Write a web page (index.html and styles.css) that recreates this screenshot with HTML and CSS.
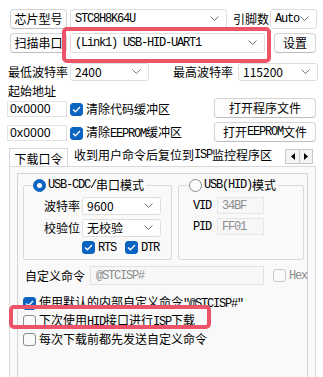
FILE: index.html
```html
<!DOCTYPE html>
<html>
<head>
<meta charset="utf-8">
<link rel="stylesheet" href="styles.css">
</head>
<body>
<div class="win">
  <div class="row r1">
    <div class="btn w57">芯片型号</div>
    <div class="sel mono s-chip"><span>STC8H8K64U</span><svg class="chev" width="9" height="6" viewBox="0 0 9 6"><path d="M0.5 0.5L4.5 4.5L8.5 0.5" fill="none" stroke="#707070"/></svg></div>
    <span class="lbl pins">引脚数</span>
    <div class="sel mono s-auto"><span>Auto</span><svg class="chev" width="9" height="6" viewBox="0 0 9 6"><path d="M0.5 0.5L4.5 4.5L8.5 0.5" fill="none" stroke="#707070"/></svg></div>
  </div>
  <div class="row r2">
    <div class="btn w57">扫描串口</div>
    <div class="sel mono s-port"><span>(Link1) USB-HID-UART1</span><svg class="chev" width="9" height="6" viewBox="0 0 9 6"><path d="M0.5 0.5L4.5 4.5L8.5 0.5" fill="none" stroke="#707070"/></svg><b class="mark mark1"></b></div>
    <div class="btn set">设置</div>
  </div>
  <div class="row r3">
    <span class="lbl w60">最低波特率</span>
    <div class="sel s-min"><span>2400</span><svg class="chev" width="9" height="6" viewBox="0 0 9 6"><path d="M0.5 0.5L4.5 4.5L8.5 0.5" fill="none" stroke="#707070"/></svg></div>
    <span class="lbl w60 maxl">最高波特率</span>
    <div class="sel s-max"><span>115200</span><svg class="chev" width="9" height="6" viewBox="0 0 9 6"><path d="M0.5 0.5L4.5 4.5L8.5 0.5" fill="none" stroke="#707070"/></svg></div>
  </div>
  <div class="row r4"><span class="lbl">起始地址</span></div>
  <div class="row r5">
    <div class="inp addr">0x0000</div>
    <span class="cb on"><svg width="9" height="7" viewBox="0 0 9 7"><path d="M1 3.5L3.4 5.8L8 1" fill="none" stroke="#fff" stroke-width="1.3"/></svg></span>
    <span class="cbt">清除代码缓冲区</span>
    <div class="btn open">打开程序文件</div>
  </div>
  <div class="row r6">
    <div class="inp addr">0x0000</div>
    <span class="cb on"><svg width="9" height="7" viewBox="0 0 9 7"><path d="M1 3.5L3.4 5.8L8 1" fill="none" stroke="#fff" stroke-width="1.3"/></svg></span>
    <span class="cbt">清除<span class="ser">EEPROM</span>缓冲区</span>
    <div class="btn open">打开<span class="ser">EEPROM</span>文件</div>
  </div>
  <div class="tabs">
    <div class="tab">下载口令</div>
    <div class="tab act">收到用户命令后复位到<span class="ser">ISP</span>监控程序区</div>
    <div class="arrows">
      <span class="arr"><svg width="4" height="7" viewBox="0 0 4 7"><path d="M4 0L0 3.5L4 7Z" fill="#000"/></svg></span>
      <span class="arr"><svg width="4" height="7" viewBox="0 0 4 7"><path d="M0 0L4 3.5L0 7Z" fill="#000"/></svg></span>
    </div>
  </div>
  <div class="panel">
    <div class="inner">
      <div class="groups">
        <fieldset class="grp g1">
          <legend><span class="rd on"></span><span class="ser">USB-CDC/</span>串口模式</legend>
          <div class="gl"><span class="glbl">波特率</span><div class="sel s-g"><span>9600</span><svg class="chev" width="9" height="6" viewBox="0 0 9 6"><path d="M0.5 0.5L4.5 4.5L8.5 0.5" fill="none" stroke="#707070"/></svg></div></div>
          <div class="gl"><span class="glbl">校验位</span><div class="sel s-g"><span>无校验</span><svg class="chev" width="9" height="6" viewBox="0 0 9 6"><path d="M0.5 0.5L4.5 4.5L8.5 0.5" fill="none" stroke="#707070"/></svg></div></div>
          <div class="gl flags">
            <span class="cb on"><svg width="9" height="7" viewBox="0 0 9 7"><path d="M1 3.5L3.4 5.8L8 1" fill="none" stroke="#fff" stroke-width="1.3"/></svg></span><span class="ser ft">RTS</span>
            <span class="cb on dtr"><svg width="9" height="7" viewBox="0 0 9 7"><path d="M1 3.5L3.4 5.8L8 1" fill="none" stroke="#fff" stroke-width="1.3"/></svg></span><span class="ser ft">DTR</span>
          </div>
        </fieldset>
        <fieldset class="grp g2">
          <legend><span class="rd"></span><span class="ser">USB(HID)</span>模式</legend>
          <div class="gl hl"><span class="ser hlbl">VID</span><div class="inp dis ser">34BF</div></div>
          <div class="gl hl"><span class="ser hlbl">PID</span><div class="inp dis ser">FF01</div></div>
        </fieldset>
      </div>
      <div class="row cmd">
        <span class="lbl">自定义命令</span>
        <div class="inp cmdi ser">@STCISP#</div>
        <span class="cb dis"></span><span class="ser hex">Hex</span>
      </div>
      <div class="row opt o1">
        <span class="cb on"><svg width="9" height="7" viewBox="0 0 9 7"><path d="M1 3.5L3.4 5.8L8 1" fill="none" stroke="#fff" stroke-width="1.3"/></svg></span>
        <span class="cbt">使用默认的内部自定义命令<span class="ser">"@STCISP#"</span></span>
      </div>
      <div class="row opt o2">
        <span class="cb"></span>
        <span class="cbt">下次使用<span class="ser">HID</span>接口进行<span class="ser">ISP</span>下载</span>
        <b class="mark mark2"></b>
      </div>
      <div class="row opt o3">
        <span class="cb"></span>
        <span class="cbt">每次下载前都先发送自定义命令</span>
      </div>
    </div>
  </div>
</div>
</body>
</html>
```

FILE: styles.css
```css
* { box-sizing: border-box; }
body {
  margin: 0;
  background: #fff;
  font: 12px/1 "Noto Sans CJK SC", "Noto Sans", sans-serif;
  color: #000;
  width: 323px;
  height: 377px;
  overflow: hidden;
}
.mono, .ser {
  font-family: "Liberation Mono", "Noto Sans CJK SC", monospace;
  font-size: 12px;
  letter-spacing: -1.2px;
}
.win { padding-top: 9px; }
.row { display: flex; align-items: center; }
.lbl { white-space: nowrap; }
.btn {
  height: 20px;
  border: 1px solid #d3d3d3;
  border-bottom-color: #bdbdbd;
  border-radius: 4px;
  background: #fdfdfd;
  display: flex;
  align-items: center;
  justify-content: center;
  white-space: nowrap;
}
.sel {
  position: relative;
  height: 20px;
  border: 1px solid #dedede;
  border-radius: 3px;
  background: #fff;
  display: flex;
  align-items: center;
  justify-content: space-between;
  padding: 0 7px 0 4px;
  white-space: nowrap;
}
.chev { flex: none; }
.inp {
  height: 16px;
  border: 1px solid #e2e2e2;
  background: #fff;
  display: flex;
  align-items: center;
  padding-left: 2px;
  white-space: nowrap;
}
.cb {
  flex: none;
  width: 13px;
  height: 13px;
  border: 1px solid #8c8c8c;
  border-radius: 3px;
  background: #fbfbfb;
  display: inline-flex;
  align-items: center;
  justify-content: center;
}
.cb.on { background: #0a63c0; border-color: #0a63c0; }
.cb.dis { border-color: #c9c9c9; background: #fafafa; }
.cbt { white-space: nowrap; }

.r1 { height: 20px; margin-left: 10px; }
.w57 { width: 57px; }
.s-chip { margin-left: 3px; width: 157px; }
.pins { margin-left: 6px; width: 36px; }
.s-auto { margin-left: 1px; width: 47px; }

.r2 { height: 20px; margin-top: 4px; margin-left: 10px; }
.s-port { margin-left: 3px; width: 195px; }
.set { margin-left: 9px; width: 42px; }

.mark {
  position: absolute;
  border: 4px solid #ec5469;
  border-radius: 5px;
  pointer-events: none;
}
.mark1 { left: -9px; top: -7px; width: 209px; height: 36px; }

.r3 { height: 18px; margin-top: 10px; margin-left: 8px; }
.w60 { width: 60px; }
.s-min { margin-left: 2px; width: 79px; height: 18px; }
.maxl { margin-left: 24px; }
.s-max { margin-left: 5px; width: 80px; height: 18px; }

.r4 { height: 16px; margin-top: 2px; margin-left: 8px; }

.r5, .r6 { height: 20px; margin-left: 7px; }
.r5 { margin-top: -1px; }
.r6 { margin-top: 4px; }
.addr { width: 60px; font-family: "Noto Sans", sans-serif; font-size: 12px; margin-top: 2px; }
.r5 .cb, .r6 .cb { margin-left: 3px; margin-top: 2px; }
.r5 .cbt, .r6 .cbt { margin-left: 3px; margin-top: 1px; }
.open { margin-left: auto; margin-right: 7px; width: 102px; }

.tabs { display: flex; align-items: flex-end; height: 18px; margin-top: 6px; margin-left: 9px; position: relative; }
.tab { height: 18px; padding: 0 4px; display: flex; align-items: center; white-space: nowrap; }
.tab:first-child { border: 1px solid #d9d9d9; border-bottom: none; width: 59px; justify-content: center; padding-top: 2px; background: #fdfdfd; }
.tab.act { padding-left: 6px; padding-bottom: 4px; }
.arrows { display: flex; margin-left: auto; margin-right: 10px; align-self: flex-start; margin-top: 1px; border: 1px solid #c8c8c8; background: #f4f4f4; }
.arr { width: 13px; height: 13px; display: flex; align-items: center; justify-content: center; }
.arr + .arr { border-left: 1px solid #c8c8c8; }

.panel {
  margin-left: 9px;
  width: 307px;
  height: 220px;
  border: 1px solid #d9d9d9;
  border-bottom: none;
  background: #fafafa;
  padding: 6px 7px 0 7px;
}
.inner {
  height: 220px;
  border-left: 1px solid #d4d4d4;
  border-top: 1px solid #d4d4d4;
  border-right: 1px solid #d4d4d4;
  background: #f9f9f9;
  padding: 4px 0 0 5px;
  position: relative;
}
.groups { display: flex; }
.grp {
  margin: 0;
  border: 1px solid #dadada;
  border-radius: 2px;
  padding: 0;
  height: 82px;
}
.g1 { width: 149px; }
.g2 { width: 126px; margin-left: 6px; }
.grp legend {
  display: flex;
  align-items: center;
  padding: 0 2px 0 0;
  margin-left: 9px;
  height: 14px;
  line-height: 14px;
  white-space: nowrap;
}
.g2 legend { margin-left: 10px; }
.rd {
  width: 13px;
  height: 13px;
  border-radius: 50%;
  border: 1px solid #8a8a8a;
  background: #fbfbfb;
  margin-right: 2px;
  position: relative;
}
.rd.on { background: #0a63c0; border-color: #0a63c0; }
.rd.on::after {
  content: "";
  position: absolute;
  left: 3px; top: 3px;
  width: 5px; height: 5px;
  border-radius: 50%;
  background: #fff;
}
.gl { display: flex; align-items: center; margin-top: 4px; }
.g1 .gl:first-of-type { margin-top: 5px; }
.glbl { width: 58px; text-align: right; padding-right: 2px; }
.s-g { width: 79px; height: 18px; }
.flags .cb { margin-left: 58px; }
.flags .cb.dtr { margin-left: 9px; }
.ft { margin-left: 3px; }
.hl .hlbl { margin-left: 14px; width: 24px; }
.g2 .gl:first-of-type { margin-top: 5px; }
.inp.dis { width: 47px; height: 17px; background: #f7f7f7; border-color: #e6e6e6; color: #8c8c8c; padding-left: 4px; }

.cmd { margin-top: 6px; height: 19px; }
.cmd .lbl { margin-left: 2px; }
.cmdi { margin-left: 5px; width: 174px; height: 19px; background: #f7f7f7; border-color: #e2e2e2; color: #8c8c8c; padding-left: 5px; }
.cmd .cb { margin-left: 9px; }
.hex { margin-left: 3px; color: #8a8a8a; }

.opt { height: 18px; position: relative; }
.opt .cbt { margin-left: 3px; }
.o1 { margin-top: 9px; }
.mark2 { left: -14px; top: -7px; width: 202px; height: 24px; }
```
